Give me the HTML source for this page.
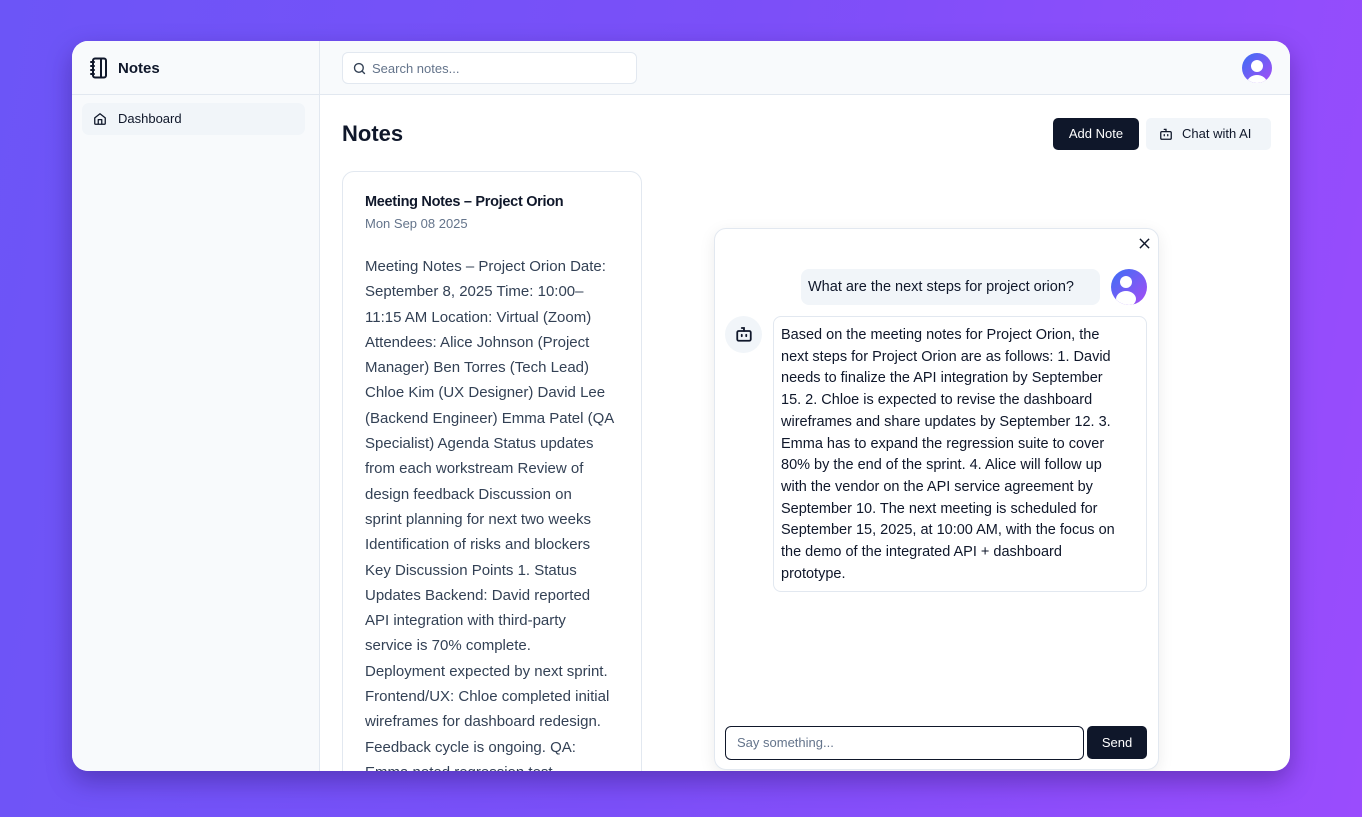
<!DOCTYPE html>
<html><head><meta charset="utf-8"><style>
*{box-sizing:border-box;margin:0;padding:0}
body{width:1362px;height:817px;overflow:hidden;font-family:"Liberation Sans",sans-serif;background:linear-gradient(100deg,#6c55f7 0%,#7b4ff8 50%,#9a4cfd 100%);position:relative;color:#0f172a}
.win{position:absolute;left:72px;top:41px;width:1218px;height:730px;background:#fff;border-radius:16px;overflow:hidden;box-shadow:0 10px 25px rgba(30,10,80,.35)}
.side{position:absolute;left:0;top:0;width:248px;height:730px;background:#f8fafc;border-right:1px solid #e2e8f0}
.head{position:absolute;left:248px;top:0;right:0;height:54px;background:#f8fafc;border-bottom:1px solid #e2e8f0}
.sidehead{height:54px;border-bottom:1px solid #e2e8f0;position:relative}
.abs{position:absolute}
.note{position:absolute;left:270px;top:130px;width:300px;height:640px;border:1px solid #e2e8f0;border-radius:12px;background:#fff}
.nt{font-size:15px;line-height:25.3px;color:#334155}
.chat{position:absolute;left:642px;top:187px;width:445px;height:542px;border:1px solid #e2e8f0;border-radius:12px;background:#fff;box-shadow:0 4px 16px rgba(0,0,0,.08)}
.av{position:absolute;width:30px;height:30px;border-radius:50%;background:linear-gradient(135deg,#3b6ff5,#a84cf5);overflow:hidden}
.av:before{content:"";position:absolute;left:9px;top:7px;width:12px;height:12px;border-radius:50%;background:#fff}
.av:after{content:"";position:absolute;left:5px;top:22px;width:20px;height:16px;border-radius:50%;background:#fff}
</style></head><body>
<div class="win">
 <div class="side">
  <div class="sidehead">
   <svg class="abs" style="left:17px;top:16px" width="20" height="22" viewBox="0 0 20 22" fill="none" stroke="#0f172a" stroke-width="2" stroke-linecap="round"><rect x="4" y="1.5" width="13" height="19" rx="2"/><path d="M2 5h3M2 9h3M2 13h3M2 17h3M12 2v18"/></svg>
   <div class="abs" style="left:46px;top:19px;font-size:15px;font-weight:bold">Notes</div>
  </div>
  <div class="abs" style="left:10px;top:62px;width:223px;height:32px;background:#f1f5f9;border-radius:7px">
   <svg class="abs" style="left:11px;top:9px" width="14" height="14" viewBox="0 0 24 24" fill="none" stroke="#0f172a" stroke-width="2.2" stroke-linejoin="round"><path d="M3 10l9-7 9 7v10a1 1 0 0 1-1 1H4a1 1 0 0 1-1-1z"/><path d="M9 21v-8h6v8"/></svg>
   <div class="abs" style="left:36px;top:8px;font-size:13px">Dashboard</div>
  </div>
 </div>
 <div class="head">
  <div class="abs" style="left:22px;top:11px;width:295px;height:32px;border:1px solid #e2e8f0;border-radius:6px;background:#fff">
   <svg class="abs" style="left:9px;top:8px" width="15" height="15" viewBox="0 0 24 24" fill="none" stroke="#334155" stroke-width="2.2" stroke-linecap="round"><circle cx="11" cy="11" r="7"/><path d="M20 20l-4-4"/></svg>
   <div class="abs" style="left:29px;top:8px;font-size:13px;color:#64748b">Search notes...</div>
  </div>
  <div class="av" style="left:922px;top:12px"></div>
 </div>
 <div class="abs" style="left:270px;top:80px;font-size:22px;font-weight:bold">Notes</div>
 <div class="abs" style="left:981px;top:77px;width:86px;height:32px;background:#0f172a;border-radius:5px;color:#fff;font-size:13px;text-align:center;line-height:32px">Add Note</div>
 <div class="abs" style="left:1074px;top:77px;width:125px;height:32px;background:#f1f5f9;border-radius:5px;font-size:13px;line-height:32px">
  <svg class="abs" style="left:13px;top:9px" width="14" height="14" viewBox="0 0 24 24" fill="none" stroke="#0f172a" stroke-width="2.2" stroke-linecap="round"><rect x="3" y="8" width="18" height="13" rx="2"/><path d="M12 8V4H9M9 13v2M15 13v2"/></svg>
  <span class="abs" style="left:36px">Chat with AI</span>
 </div>
 <div class="note">
  <div class="abs" style="left:22px;top:22px;font-size:14.5px;font-weight:bold;letter-spacing:-.3px">Meeting Notes – Project Orion</div>
  <div class="abs" style="left:22px;top:44px;font-size:13px;color:#64748b">Mon Sep 08 2025</div>
  <div class="abs nt" style="left:22px;top:82px;width:275px">Meeting Notes – Project Orion Date:<br>September 8, 2025 Time: 10:00–<br>11:15 AM Location: Virtual (Zoom)<br>Attendees: Alice Johnson (Project<br>Manager) Ben Torres (Tech Lead)<br>Chloe Kim (UX Designer) David Lee<br>(Backend Engineer) Emma Patel (QA<br>Specialist) Agenda Status updates<br>from each workstream Review of<br>design feedback Discussion on<br>sprint planning for next two weeks<br>Identification of risks and blockers<br>Key Discussion Points 1. Status<br>Updates Backend: David reported<br>API integration with third-party<br>service is 70% complete.<br>Deployment expected by next sprint.<br>Frontend/UX: Chloe completed initial<br>wireframes for dashboard redesign.<br>Feedback cycle is ongoing. QA:<br>Emma noted regression test</div>
 </div>
 <div class="chat">
  <svg class="abs" style="left:424px;top:9px" width="11" height="11" viewBox="0 0 12 12" stroke="#0f172a" stroke-width="1.6"><path d="M1 1l10 10M11 1L1 11"/></svg>
  <div class="abs" style="left:86px;top:40px;width:299px;height:36px;background:#f1f5f9;border-radius:8px;font-size:14.5px;line-height:36px;padding-left:7px">What are the next steps for project orion?</div>
  <div class="av" style="left:396px;top:40px;width:36px;height:36px"></div>
  <div class="abs" style="left:10px;top:87px;width:37px;height:37px;border-radius:50%;background:#f1f5f9">
   <svg class="abs" style="left:10px;top:9px" width="18" height="18" viewBox="0 0 24 24" fill="none" stroke="#0f172a" stroke-width="2.4" stroke-linecap="round"><rect x="3" y="8" width="18" height="13" rx="2"/><path d="M12 8V4H9M9 13v2M15 13v2"/></svg>
  </div>
  <div class="abs" style="left:58px;top:87px;width:374px;height:276px;border:1px solid #e2e8f0;border-radius:8px;padding:8px 7px;font-size:14.5px;line-height:21.7px">Based on the meeting notes for Project Orion, the<br>next steps for Project Orion are as follows: 1. David<br>needs to finalize the API integration by September<br>15. 2. Chloe is expected to revise the dashboard<br>wireframes and share updates by September 12. 3.<br>Emma has to expand the regression suite to cover<br>80% by the end of the sprint. 4. Alice will follow up<br>with the vendor on the API service agreement by<br>September 10. The next meeting is scheduled for<br>September 15, 2025, at 10:00 AM, with the focus on<br>the demo of the integrated API + dashboard<br>prototype.</div>
  <div class="abs" style="left:10px;top:497px;width:359px;height:34px;border:1.5px solid #0f172a;border-radius:6px;font-size:13px;color:#64748b;line-height:31px;padding-left:11px">Say something...</div>
  <div class="abs" style="left:372px;top:497px;width:60px;height:33px;background:#0f172a;border-radius:5px;color:#fff;font-size:13px;text-align:center;line-height:33px">Send</div>
 </div>
</div>
</body></html>
